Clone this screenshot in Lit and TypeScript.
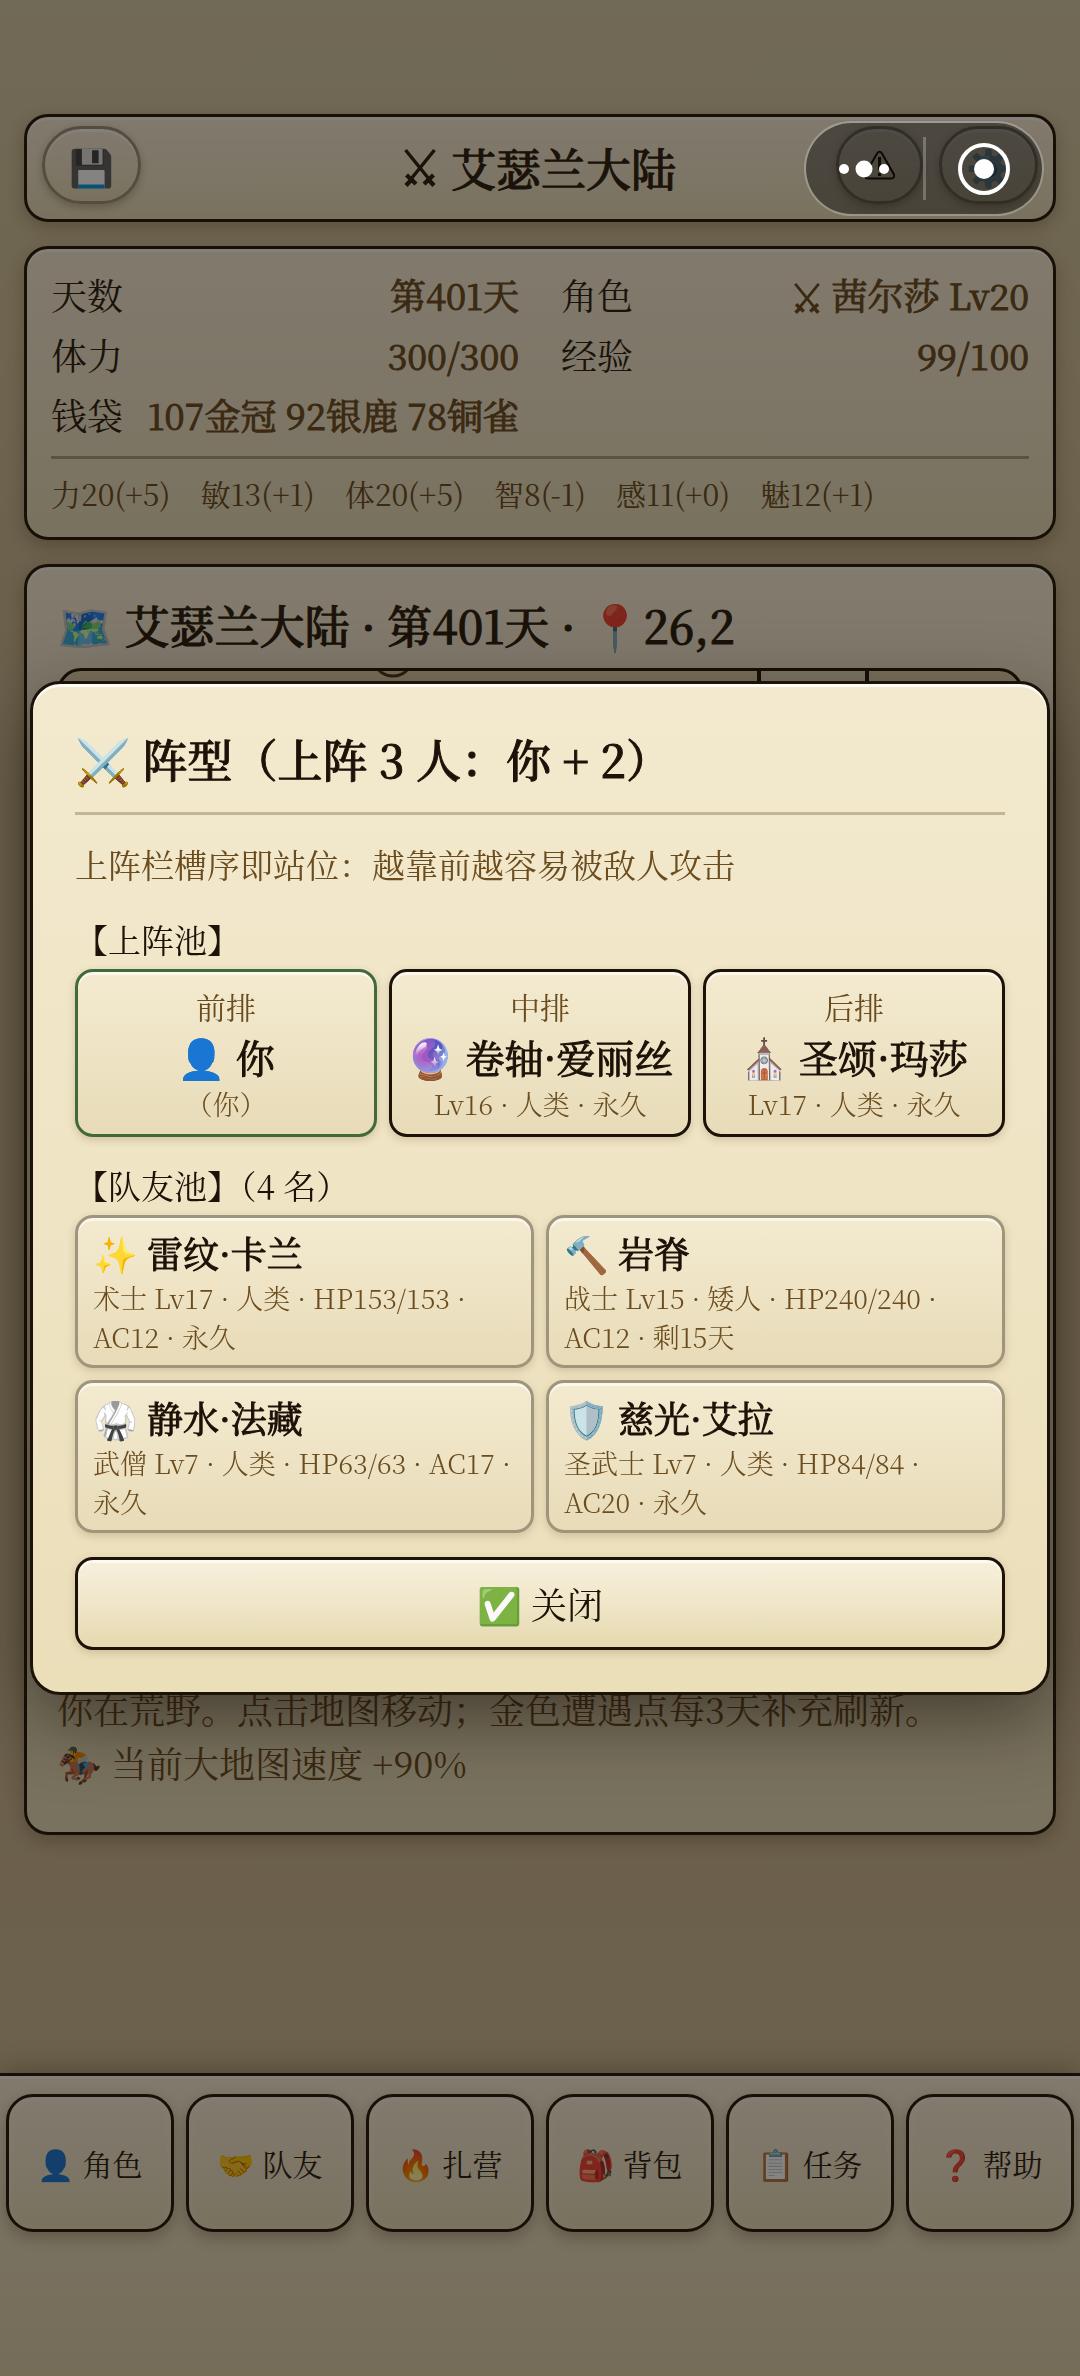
import { LitElement, html, css, svg } from "lit";
import { customElement } from "lit/decorators.js";

interface Slot { row: string; icon: string; name: string; detail: string; self?: boolean; }
interface Mate { icon: string; name: string; detail: string; }

const SLOTS: Slot[] = [
  { row: "前排", icon: "👤", name: "你", detail: "（你）", self: true },
  { row: "中排", icon: "🔮", name: "卷轴·爱丽丝", detail: "Lv16 · 人类 · 永久" },
  { row: "后排", icon: "⛪", name: "圣颂·玛莎", detail: "Lv17 · 人类 · 永久" },
];
const MATES: Mate[] = [
  { icon: "✨", name: "雷纹·卡兰", detail: "术士 Lv17 · 人类 · HP153/153 · AC12 · 永久" },
  { icon: "🔨", name: "岩脊", detail: "战士 Lv15 · 矮人 · HP240/240 · AC12 · 剩15天" },
  { icon: "🥋", name: "静水·法藏", detail: "武僧 Lv7 · 人类 · HP63/63 · AC17 · 永久" },
  { icon: "🛡️", name: "慈光·艾拉", detail: "圣武士 Lv7 · 人类 · HP84/84 · AC20 · 永久" },
];
const ATTRS = ["力20(+5)", "敏13(+1)", "体20(+5)", "智8(-1)", "感11(+0)", "魅12(+1)"];
const NAV = [
  ["👤", "角色"], ["🤝", "队友"], ["🔥", "扎营"], ["🎒", "背包"], ["📋", "任务"], ["❓", "帮助"],
];

const swords = html`<svg class="swords" viewBox="0 0 32 38" aria-hidden="true">
  <g fill="none" stroke="currentColor" stroke-linecap="butt">
    <path stroke-width="3.4" d="M1.500 1L25 30M30.500 1L7 30"/>
    <path stroke-width="4.4" d="M2.500 26L12 35M29.500 26L20 35M9 29L2 36.500M23 29L30 36.500"/>
  </g></svg>`;

@customElement("app-root")
export class AppRoot extends LitElement {
  static styles = css`
    :host {
      display: block;
      font-family: "Noto Serif CJK SC", "Noto Serif SC", "Noto Sans CJK SC", "Noto Color Emoji", serif;
      color: #2a1c0e;
      --ink: #241809;
      --brown: #6b4c1e;
      --paper: linear-gradient(#f6ecd6, #f0e6cc 50%, #e6dcb8);
      --shine: inset 0 3px 0 rgba(255, 255, 255, 0.6);
    }
    * { box-sizing: border-box; margin: 0; }
    button { font: inherit; color: inherit; padding: 0; cursor: pointer; }
    h1, h2, .pair dd, .slot b, .mate b { font-weight: 400; -webkit-text-stroke: 1px currentColor; }
    h1, h2 { font-weight: 500; }
    .page {
      min-height: 100vh;
      display: flex;
      flex-direction: column;
      background: linear-gradient(#d6ccaa, #d3c59f 10%, #cbb995 25%, #cbb895 75%, #cebe99);
    }
    main { flex: 1; padding: 114px 24px 24px; display: flex; flex-direction: column; gap: 24px; }
    .card {
      border: 3px solid var(--ink);
      border-radius: 24px;
      background: var(--paper);
      box-shadow: 0 6px 18px rgba(70, 45, 15, 0.3), var(--shine);
    }
    .top { display: grid; grid-template-columns: 1fr auto 1fr; padding: 9px 15px; align-items: start; }
    .top h1 { font-size: 45px; line-height: 84px; display: flex; align-items: center; gap: 15px; }
    .tools { display: flex; gap: 16px; }
    .tools.end { justify-content: flex-end; }
    .pill {
      width: 99px; height: 78px; border-radius: 39px;
      border: 3px solid #9d9179; background: var(--paper);
      font-size: 36px;
      box-shadow: 0 3px 9px rgba(70, 45, 15, 0.3), var(--shine);
      display: flex; align-items: center; justify-content: center;
    }
    .pill.slim { width: 87px; }
    .pill svg { width: 33px; height: 30px; }
    .swords { width: 32px; height: 38px; }
    .value .swords { width: 26px; height: 31px; margin-right: 11px; vertical-align: -4px; }
    .stats { padding: 16px 24px 20px; }
    .grid { display: grid; grid-template-columns: 1fr 1fr; column-gap: 42px; font-size: 36px; line-height: 60px; }
    .pair { display: flex; justify-content: space-between; white-space: nowrap; height: 60px; }
    .pair dd { color: var(--brown); }
    .attrs {
      margin: 11px 0 0; border-top: 3px solid #a99f86; padding: 12px 0 1px; list-style: none;
      display: flex; gap: 30px; font-size: 30px; line-height: 45px; color: var(--brown);
    }
    .world { padding: 26px 30px 42px; }
    .world h2 { font-size: 45px; line-height: 63px; margin-bottom: 12px; white-space: nowrap; }
    .map {
      display: block; width: 100%; aspect-ratio: 1; border: 3px solid var(--ink);
      border-radius: 24px; background: #e6dab6;
    }
    .note { margin-top: 48px; font-size: 36px; line-height: 54px; color: var(--brown); }
    nav {
      border-top: 3px solid var(--ink);
      background: linear-gradient(#f6ecd6, #e9dfc2 40%, #ded2ac);
      box-shadow: 0 -6px 24px rgba(70, 45, 15, 0.3), var(--shine);
      padding: 18px 6px 144px;
      display: grid; grid-template-columns: repeat(6, 1fr); gap: 12px;
    }
    .navbtn {
      height: 138px; border: 3px solid var(--ink); border-radius: 27px;
      background: var(--paper); font-size: 30px; white-space: nowrap;
      box-shadow: 0 6px 15px rgba(70, 45, 15, 0.3), inset 0 3px 9px rgba(255, 255, 255, 0.4);
    }
    .veil {
      position: fixed; inset: 0; background: rgba(12, 8, 4, 0.5);
      display: flex; align-items: center; justify-content: center; padding: 30px;
    }
    .modal {
      width: 100%; border: 3px solid #1c1208; border-radius: 30px; padding: 42px;
      background: linear-gradient(#f3e9ce, #ebdfba);
      box-shadow: 0 24px 72px rgba(20, 12, 4, 0.5), inset 0 3px 0 rgba(255, 255, 255, 0.8);
      color: #1c1208;
    }
    .modal h2 { font-size: 45px; line-height: 66px; border-bottom: 3px solid #c2b697; padding-bottom: 20px; }
    .sub { margin-top: 22px; font-size: 33px; line-height: 54px; color: #6b4c1e; }
    .pool { margin: 21px 0 3px; font-size: 33px; line-height: 54px; font-weight: 400; }
    .slots { display: grid; grid-template-columns: repeat(3, 1fr); gap: 12px; }
    .mates { display: grid; grid-template-columns: 1fr 1fr; gap: 12px; }
    .slot, .mate, .close {
      border: 3px solid #1c1208; border-radius: 18px;
      background: linear-gradient(#f3ead0, #eee3c4 50%, #e7dbb8);
      box-shadow: 0 3px 9px rgba(90, 60, 20, 0.2), inset 0 3px 0 rgba(255, 255, 255, 0.6);
    }
    .slot {
      height: 168px; padding-top: 12px; white-space: nowrap;
      display: flex; flex-direction: column; align-items: center; justify-content: flex-start;
    }
    .slot.self { border-color: #42693a; }
    .slot small { font-size: 27px; line-height: 42px; font-weight: 300; color: #6b4c1e; }
    .slot small.row { font-size: 30px; line-height: 45px; font-weight: 400; }
    .slot b { font-size: 39px; line-height: 54px; }
    .mate { border-color: #9f957c; padding: 9px 15px; text-align: left; min-height: 153px; }
    .mate b, .mate small { display: block; }
    .mate b { font-size: 36px; line-height: 51px; }
    .mate small { font-size: 27px; line-height: 39px; font-weight: 300; color: #6b4c1e; }
    .close {
      display: block; width: 100%; height: 93px; margin-top: 24px; font-size: 36px;
      background: linear-gradient(#f7f0dd, #f0e6c8 50%, #e6d9b0);
    }
    .capsule {
      position: fixed; top: 121px; right: 36px; width: 240px; height: 95px;
      border: 2px solid rgba(255, 255, 255, 0.25); border-radius: 48px;
      background: rgba(0, 0, 0, 0.4); background-clip: padding-box;
      display: flex; align-items: center;
    }
    .capsule button { flex: 1; height: 100%; border: 0; background: none; display: flex; align-items: center; justify-content: center; }
    .capsule i { width: 3px; height: 63px; background: rgba(255, 255, 255, 0.25); }
    .capsule svg { width: 54px; height: 54px; }
  `;

  private pair(label: string, value: unknown) {
    return html`<div class="pair"><dt>${label}</dt><dd class="value">${value}</dd></div>`;
  }

  render() {
    return html`
      <div class="page">
        <main>
          <header class="card top">
            <div class="tools"><button class="pill" aria-label="存档">💾</button></div>
            <h1>${swords}<span>艾瑟兰大陆</span></h1>
            <div class="tools end">
              <button class="pill slim" aria-label="警告">
                <svg viewBox="0 0 33 30"><path d="M14 3.500Q16.500 0 19 3.500L31 24.500Q32 28.500 28 28.500H5Q1 28.500 2 24.500Z" fill="none" stroke="#241809" stroke-width="2"/><path d="M16.500 7V20M16.500 23V26" stroke="#241809" stroke-width="3"/></svg>
              </button>
              <button class="pill" aria-label="设置">⚙️</button>
            </div>
          </header>
          <section class="card stats">
            <dl class="grid">
              ${this.pair("天数", "第401天")}
              ${this.pair("角色", html`${swords}茜尔莎 Lv20`)}
              ${this.pair("体力", "300/300")}
              ${this.pair("经验", "99/100")}
              ${this.pair("钱袋", "107金冠 92银鹿 78铜雀")}
            </dl>
            <ul class="attrs">${ATTRS.map((a) => html`<li>${a}</li>`)}</ul>
          </section>
          <section class="card world">
            <h2>🗺️ 艾瑟兰大陆 · 第401天 · 📍26,2</h2>
            <svg class="map" viewBox="0 0 960 960" preserveAspectRatio="xMidYMin slice">
              ${svg`<rect x="700" width="108" height="960" fill="#ece3cc"/>
              <path d="M699 0V960M807 0V960" stroke="#241809" stroke-width="4"/>
              <circle cx="333" cy="-15" r="20" fill="#e6dab6" stroke="#4a3720" stroke-width="3"/>`}
            </svg>
            <p class="note">你在荒野。点击地图移动；金色遭遇点每3天补充刷新。<br>🏇 当前大地图速度 +90%</p>
          </section>
        </main>
        <nav>${NAV.map(([i, t]) => html`<button class="navbtn">${i} ${t}</button>`)}</nav>
      </div>
      <div class="veil">
        <section class="modal" role="dialog" aria-modal="true" aria-labelledby="formation">
          <h2 id="formation">⚔️ 阵型（上阵 3 人：你 + 2）</h2>
          <p class="sub">上阵栏槽序即站位：越靠前越容易被敌人攻击</p>
          <h3 class="pool">【上阵池】</h3>
          <div class="slots">
            ${SLOTS.map((s) => html`<button class="slot ${s.self ? "self" : ""}">
              <small class="row">${s.row}</small><b>${s.icon} ${s.name}</b><small>${s.detail}</small>
            </button>`)}
          </div>
          <h3 class="pool">【队友池】（4 名）</h3>
          <div class="mates">
            ${MATES.map((m) => html`<button class="mate"><b>${m.icon} ${m.name}</b><small>${m.detail}</small></button>`)}
          </div>
          <button class="close">✅ 关闭</button>
        </section>
      </div>
      <div class="capsule">
        <button aria-label="更多"><svg viewBox="0 0 54 54" fill="#fff"><circle cx="7" cy="27" r="5"/><circle cx="27" cy="27" r="8.500"/><circle cx="47" cy="27" r="5"/></svg></button>
        <i></i>
        <button aria-label="关闭小程序"><svg viewBox="0 0 54 54" fill="#fff"><circle cx="27" cy="27" r="24" fill="none" stroke="#fff" stroke-width="4"/><circle cx="27" cy="27" r="10"/></svg></button>
      </div>
    `;
  }
}
